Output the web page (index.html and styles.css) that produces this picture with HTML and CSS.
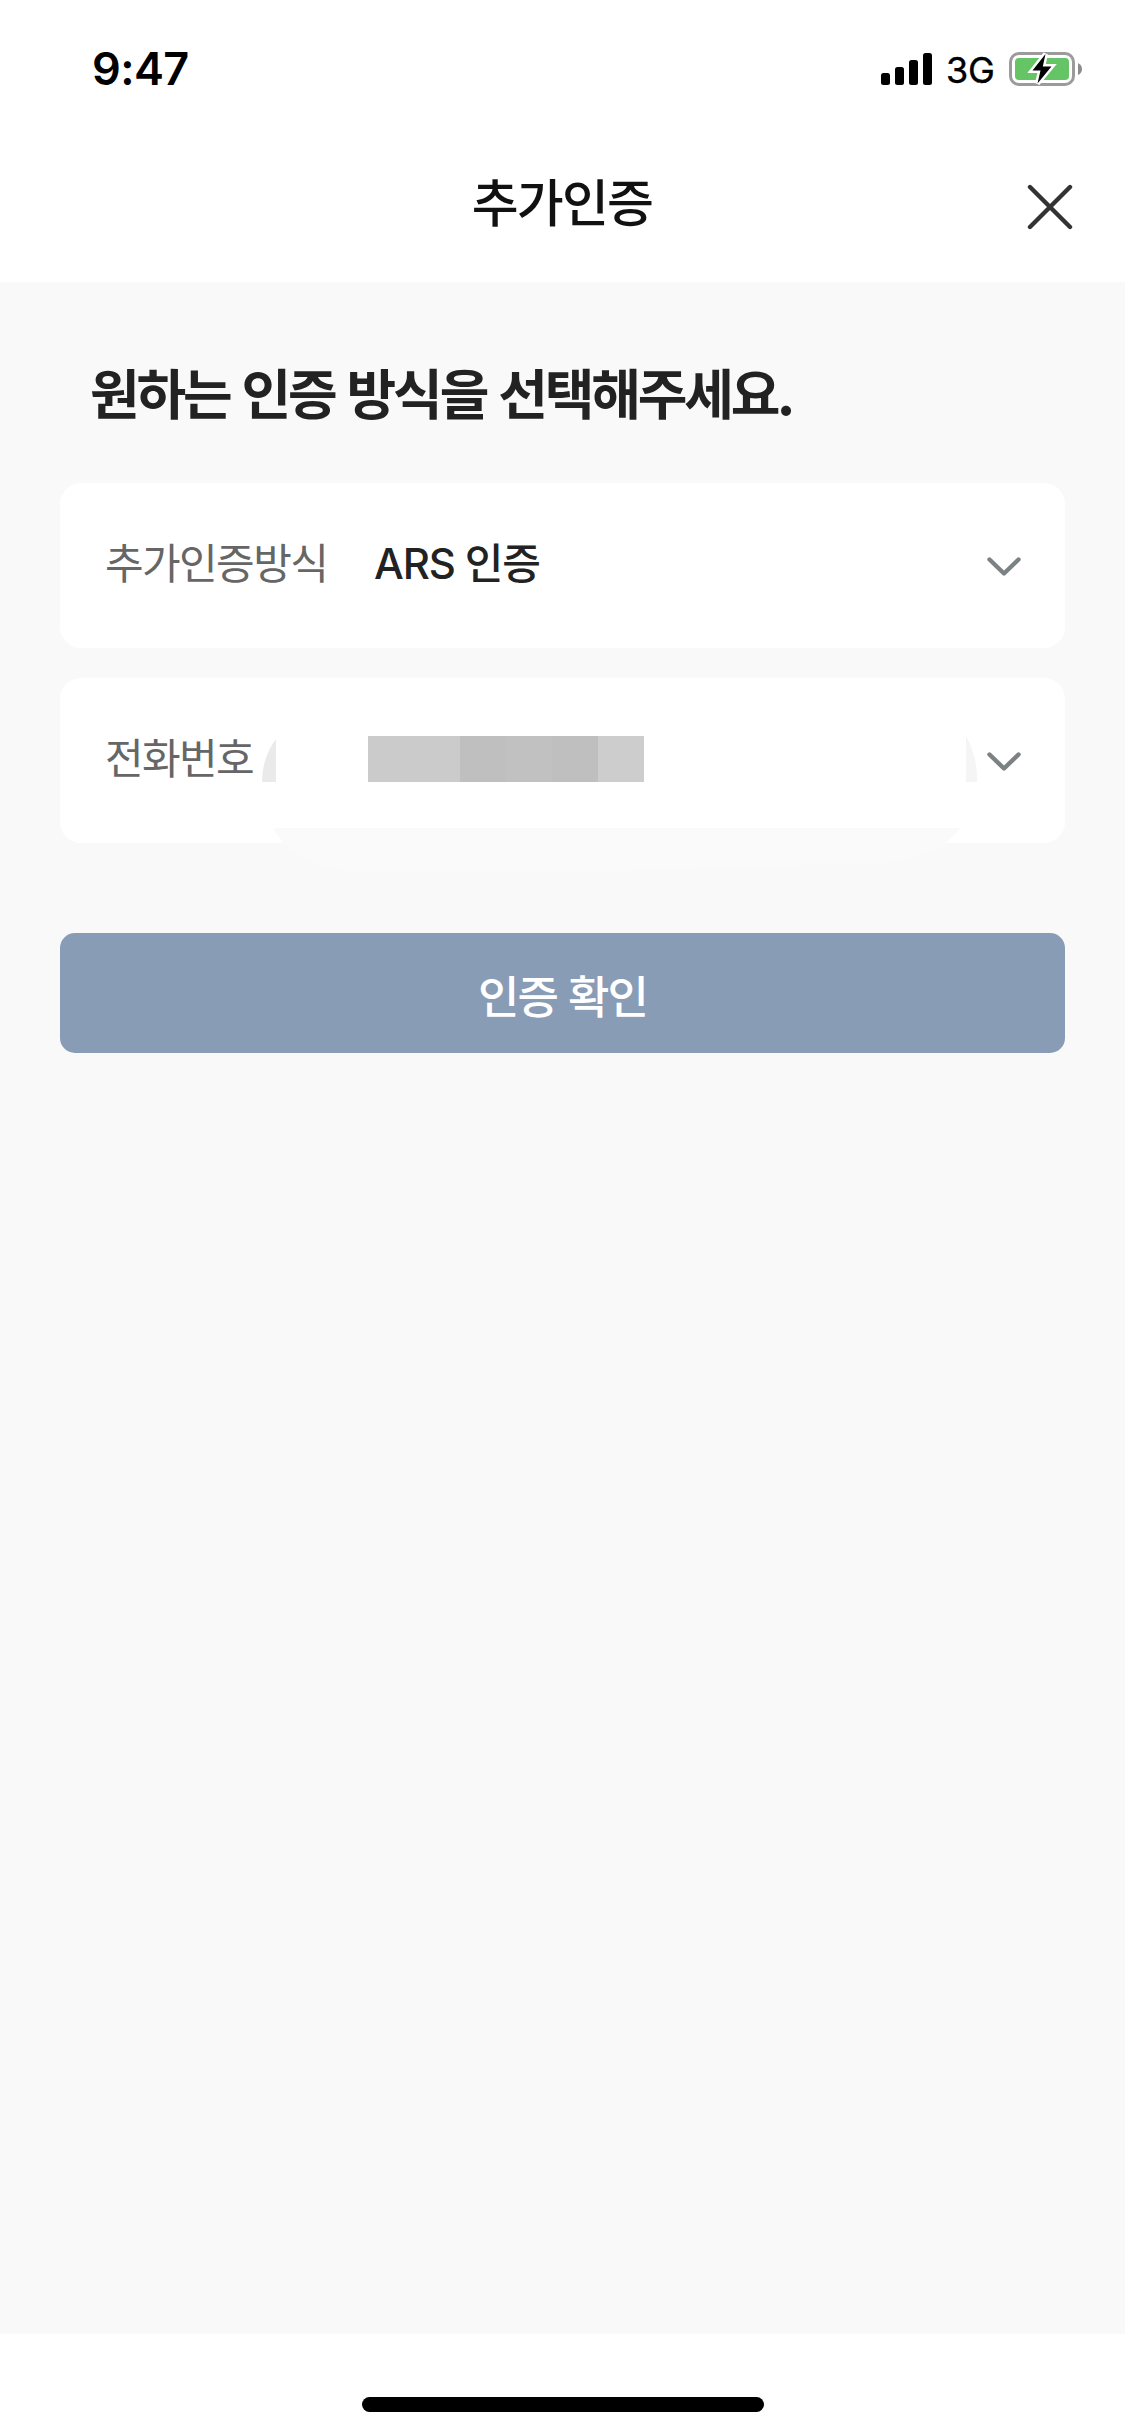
FILE: index.html
```html
<!DOCTYPE html>
<html lang="ko">
<head>
<meta charset="utf-8">
<title>추가인증</title>
<link rel="stylesheet" href="styles.css">
</head>
<body>
<div class="screen">
  <div class="status">
    <span class="time">9:47</span>
    <div class="indicators">
      <svg class="signal" width="51" height="32" viewBox="0 0 51 32"><rect y="20" width="9" height="12" rx="2.5"/><rect x="14" y="14" width="9" height="18" rx="2.5"/><rect x="28" y="7" width="9" height="25" rx="2.5"/><rect x="42" width="9" height="32" rx="2.5"/></svg>
      <span class="network">3G</span>
      <svg class="battery" width="74" height="36" viewBox="0 0 74 36">
        <rect x="1.5" y="2.5" width="63" height="31" rx="8.5" fill="none" stroke="#9b9b9b" stroke-width="3"/>
        <rect x="6" y="7" width="54" height="22" rx="4" fill="#65c466"/>
        <path d="M69 12Q73 14 73 18Q73 22 69 24Z" fill="#8c8c8c"/>
        <path d="M36.500 3L23.500 19.500H31.500L28.500 32.500L42.500 15.500H33.800Z" fill="#000" stroke="#fff" stroke-width="5" paint-order="stroke"/>
      </svg>
    </div>
  </div>
  <header class="header">
    <h1 class="title">추가인증</h1>
    <svg class="close" width="46" height="46" viewBox="0 0 46 46"><path d="M3 3L43 43M43 3L3 43" fill="none" stroke="#333" stroke-width="4.400" stroke-linecap="round"/></svg>
  </header>
  <main class="content">
    <h2 class="heading">원하는 인증 방식을 선택해주세요.</h2>
    <div class="field">
      <span class="label">추가인증방식</span>
      <span class="value">ARS 인증</span>
      <svg class="chevron" width="34" height="20" viewBox="0 0 34 20"><path d="M2.500 2.500L17 16.500L31.500 2.500" fill="none" stroke="#7c8284" stroke-width="4.400" stroke-linecap="round" stroke-linejoin="round"/></svg>
    </div>
    <div class="field">
      <span class="label">전화번호</span>
      <svg class="chevron" width="34" height="20" viewBox="0 0 34 20"><path d="M2.500 2.500L17 16.500L31.500 2.500" fill="none" stroke="#7c8284" stroke-width="4.400" stroke-linecap="round" stroke-linejoin="round"/></svg>
      <svg class="mask" width="1005" height="200" viewBox="0 0 1005 200">
        <path d="M216 61V104H202Q202 80 216 61Z" fill="#eaeaea"/>
        <path d="M906 58V104H917Q918 80 906 58Z" fill="#f5f5f5"/>
        <path d="M213 150H901L886 165Q860 182 825 185L680 189L560 193H285Q250 188 223 165Z" fill="#fafafa"/>
        <path d="M308 58h92v46h-92z" fill="#cbcbcb"/>
        <path d="M400 58h138v46h-138z" fill="#bfbfbf"/>
        <path d="M446 58h46v46h-46z" fill="#c1c1c1"/>
        <path d="M538 58h46v46h-46z" fill="#cdcdcd"/>
      </svg>
    </div>
    <button class="confirm">인증 확인</button>
  </main>
  <footer class="footer"><div class="home"></div></footer>
</div>
</body>
</html>
```
FILE: styles.css
```css
* { box-sizing: border-box; }
body { margin: 0; background: #fff; font-family: "Noto Sans CJK KR", sans-serif; }
.screen { width: 1125px; height: 2436px; display: flex; flex-direction: column; }
.status { height: 132px; padding: 6px 42px 0 92px; display: flex; align-items: center; justify-content: space-between; }
.time { font: 600 45px/60px Inter, sans-serif; letter-spacing: -0.6px; padding-bottom: 1px; }
.indicators { display: flex; align-items: center; }
.network { font: 400 36px/48px Inter, sans-serif; margin: 1px 14.4px 0 14px; letter-spacing: -0.2px; -webkit-text-stroke: 0.4px #000; }
.header { height: 150px; padding: 0 53px 0 97px; display: flex; align-items: center; }
.close { margin-right: -1px; }
.title { flex: 1; margin: 0; padding-bottom: 14px; text-align: center; font-size: 51px; font-weight: 500; line-height: 72px; letter-spacing: -1.8px; color: #111; }
.content { flex: 1; background: #f9f9f9; padding: 71px 60px 0; display: flex; flex-direction: column; }
.heading { margin: 0 0 52px; padding-left: 30px; height: 78px; font-size: 54px; font-weight: 700; line-height: 78px; letter-spacing: -3.15px; color: #222; white-space: nowrap; }
.field { position: relative; height: 165px; margin-bottom: 30px; padding: 0 44px 0 45px; display: flex; align-items: center; background: #fff; border-radius: 21px; font-size: 42px; line-height: 60px; letter-spacing: -1.3px; white-space: nowrap; }
.label { width: 269px; color: #666; padding-bottom: 9px; letter-spacing: -1.6px; }
.value { font-family: Inter, "Noto Sans CJK KR", sans-serif; color: #222; font-weight: 500; padding-bottom: 3px; letter-spacing: -1.15px; }
.chevron { margin-left: auto; margin-top: 3px; }
.mask { position: absolute; left: 0; top: 0; }
.confirm { margin-top: 60px; height: 120px; border: 0; border-radius: 15px; padding: 4px 0 0; background: #899cb6; color: #fff; font: 500 45px/66px "Noto Sans CJK KR", sans-serif; letter-spacing: -1.8px; }
.footer { height: 102px; padding-top: 63px; display: flex; justify-content: center; }
.home { width: 402px; height: 15px; border-radius: 8px; background: #000; }
```
